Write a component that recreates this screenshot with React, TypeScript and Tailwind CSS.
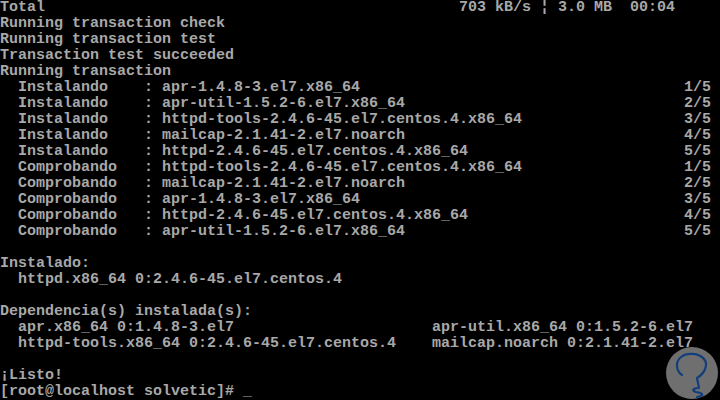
import React from 'react';

// yum output on an 80x25 text console (9x16 cells)
const COLS = 80;

const row = (left: string, right = '', at = 0): string =>
  right ? left.padEnd(at, ' ') + right : left;

const steps: [string, string, string][] = [
  ['Instalando', 'apr-1.4.8-3.el7.x86_64', '1/5'],
  ['Instalando', 'apr-util-1.5.2-6.el7.x86_64', '2/5'],
  ['Instalando', 'httpd-tools-2.4.6-45.el7.centos.4.x86_64', '3/5'],
  ['Instalando', 'mailcap-2.1.41-2.el7.noarch', '4/5'],
  ['Instalando', 'httpd-2.4.6-45.el7.centos.4.x86_64', '5/5'],
  ['Comprobando', 'httpd-tools-2.4.6-45.el7.centos.4.x86_64', '1/5'],
  ['Comprobando', 'mailcap-2.1.41-2.el7.noarch', '2/5'],
  ['Comprobando', 'apr-1.4.8-3.el7.x86_64', '3/5'],
  ['Comprobando', 'httpd-2.4.6-45.el7.centos.4.x86_64', '4/5'],
  ['Comprobando', 'apr-util-1.5.2-6.el7.x86_64', '5/5'],
];

const lines: string[] = [
  row('Total', '703 kB/s ¦ 3.0 MB  00:04', 51),
  'Running transaction check',
  'Running transaction test',
  'Transaction test succeeded',
  'Running transaction',
  ...steps.map(([verb, pkg, n]) => row(`  ${verb.padEnd(14, ' ')}: ${pkg}`, n, 76)),
  '',
  'Instalado:',
  '  httpd.x86_64 0:2.4.6-45.el7.centos.4',
  '',
  'Dependencia(s) instalada(s):',
  row('  apr.x86_64 0:1.4.8-3.el7', 'apr-util.x86_64 0:1.5.2-6.el7', 48),
  row('  httpd-tools.x86_64 0:2.4.6-45.el7.centos.4', 'mailcap.noarch 0:2.1.41-2.el7', 48),
  '',
  '¡Listo!',
  '[root@localhost solvetic]# _',
];

const Watermark: React.FC = () => (
  <svg width="52" height="52" viewBox="0 0 52 52" className="absolute left-[666px] top-[347px]">
    <circle cx="26" cy="26" r="26" fill="#6f6f6f" />
    <path
      d="M16 28 C10 24 9 15 15 10 C21 5 33 6 38 12 C43 18 38 27 31 31 L33 41 C29 41 24 43 30 45 C36 46 40 48 31 50"
      fill="none"
      stroke="#123f7c"
      strokeWidth="2.2"
      strokeLinecap="round"
      strokeLinejoin="round"
    />
  </svg>
);

export default function App() {
  return (
    <div className="relative w-[720px] h-[400px] bg-black overflow-hidden">
      <pre
        className="m-0 text-[15px] leading-[16px] font-bold text-[#a8a8a8] whitespace-pre"
        style={{ fontFamily: '"Liberation Mono", "DejaVu Sans Mono", monospace', width: COLS * 9 }}
      >
        {lines.map((l, i) => (
          <div key={i} className="h-4">
            {l}
          </div>
        ))}
      </pre>
      <Watermark />
    </div>
  );
}
